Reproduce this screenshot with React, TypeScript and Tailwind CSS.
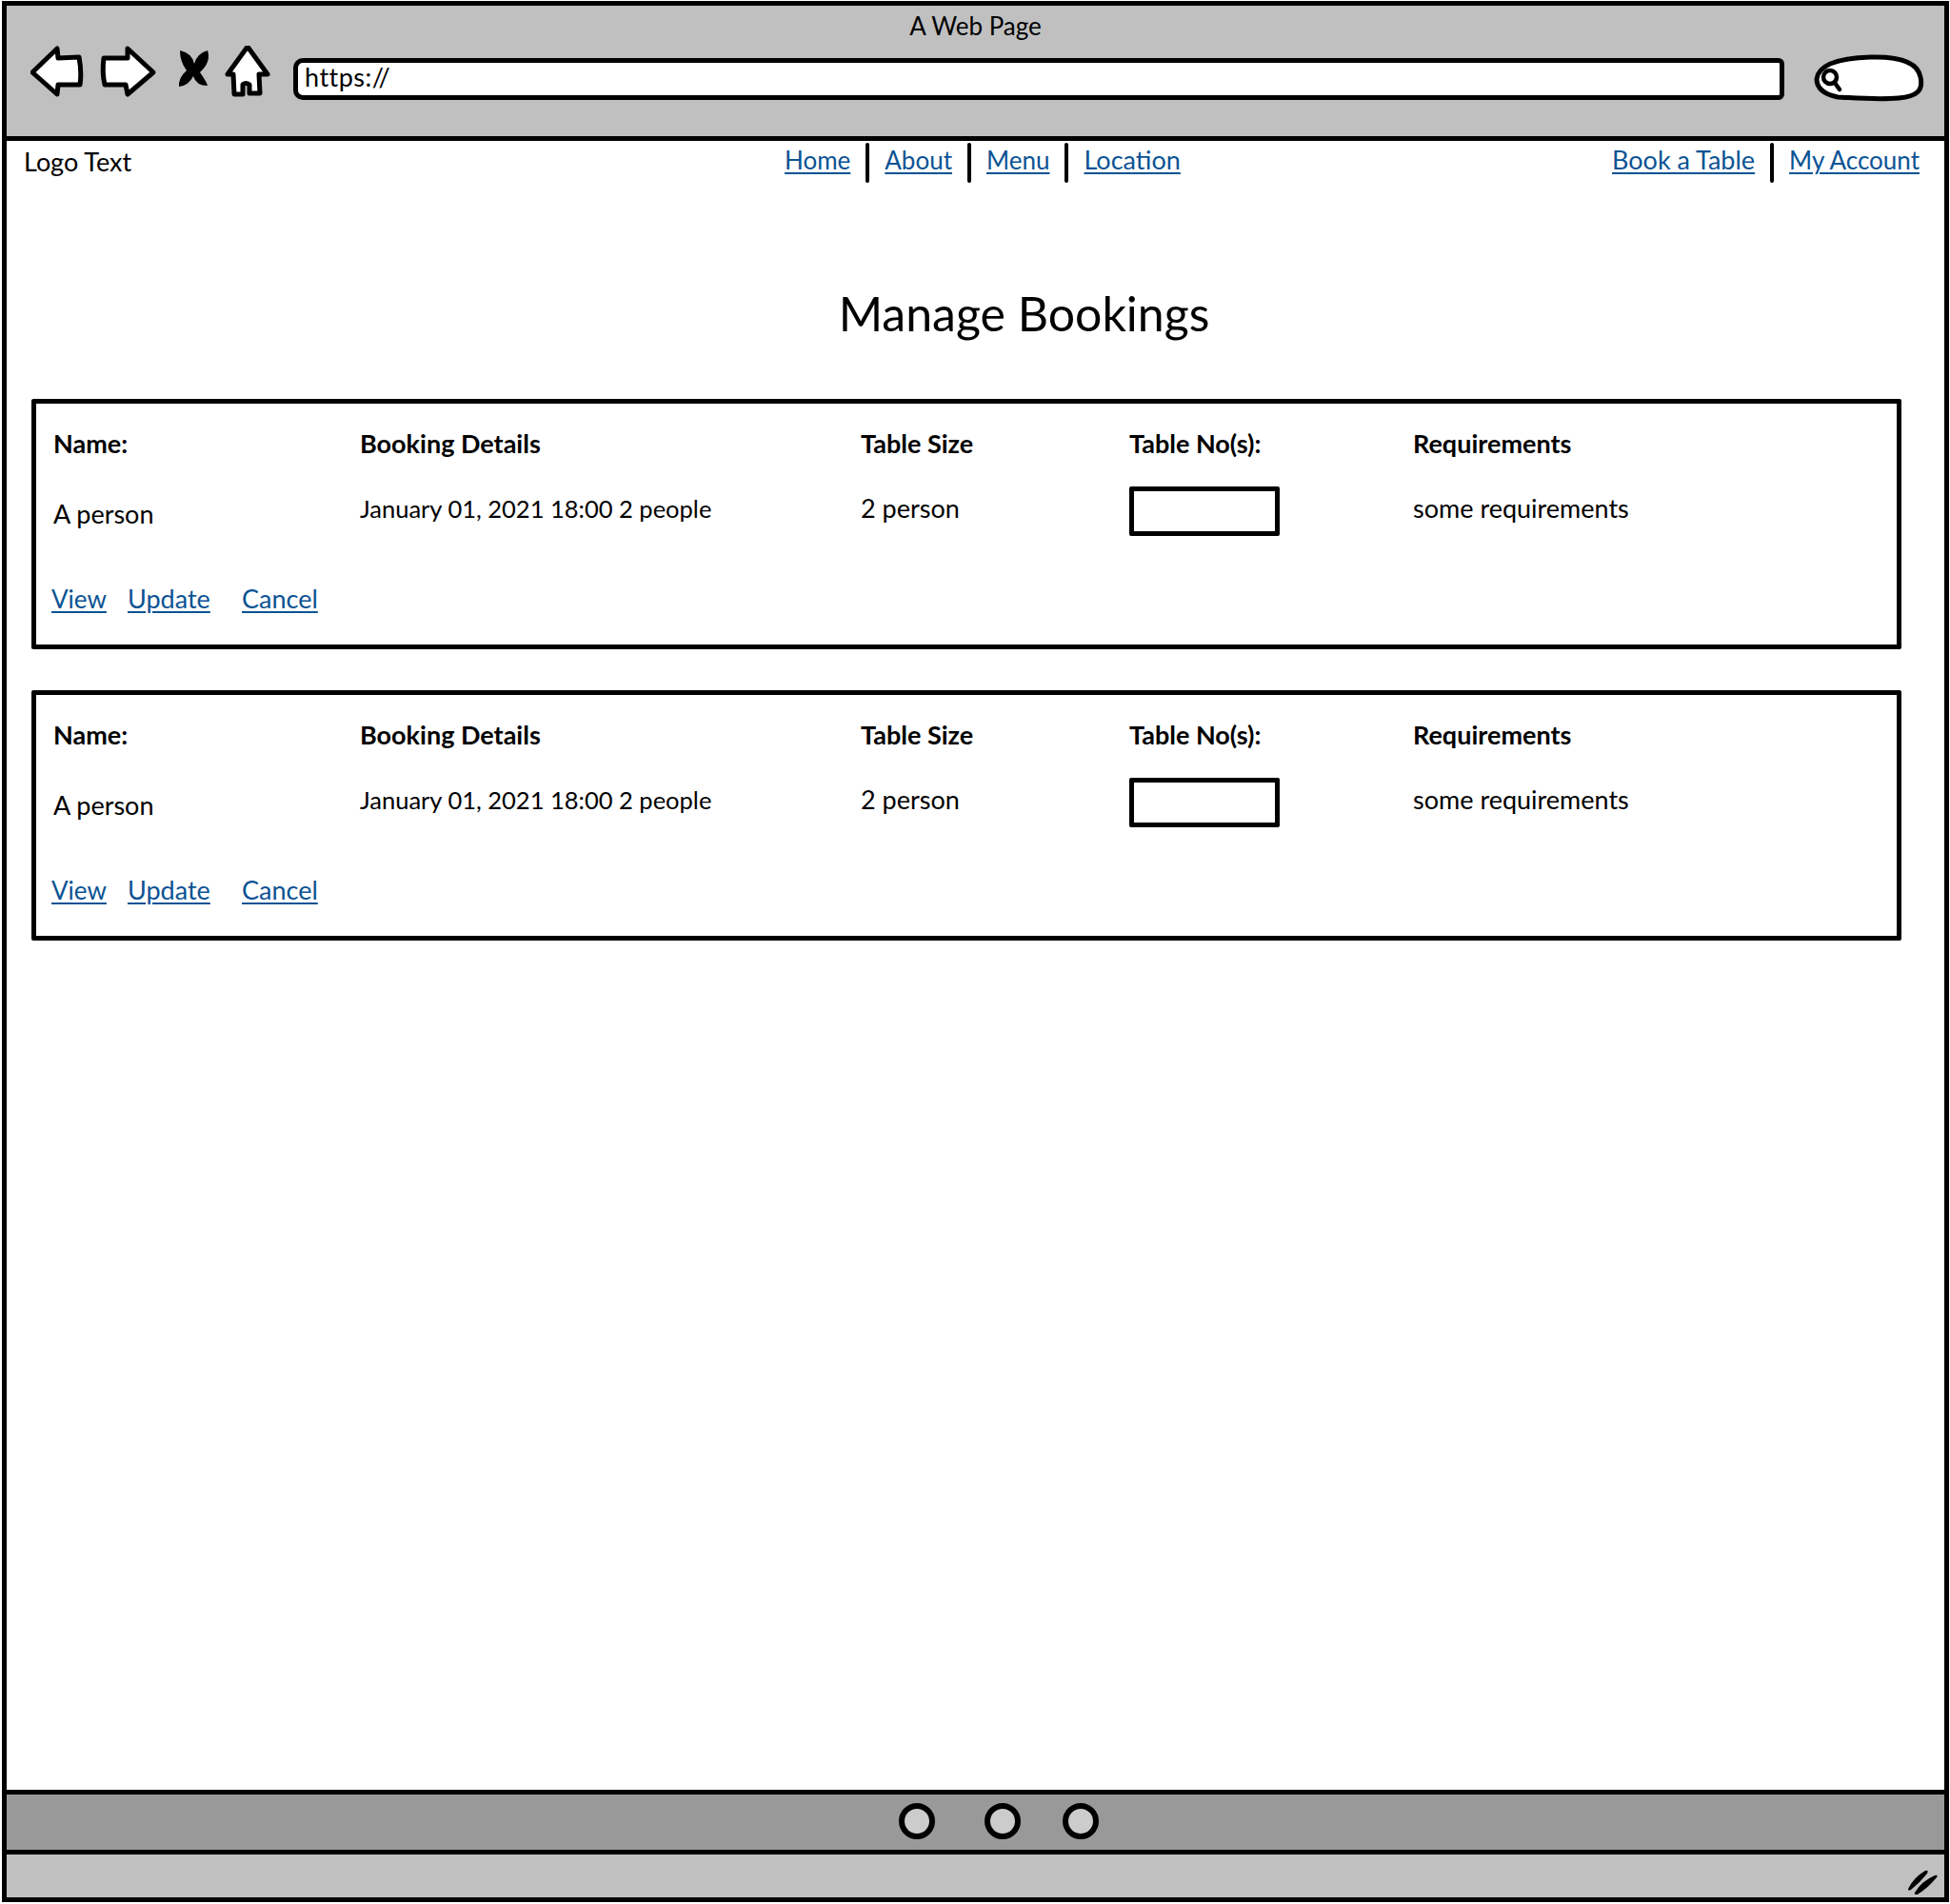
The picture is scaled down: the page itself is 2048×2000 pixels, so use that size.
const sketchFont = "font-['Lato','Noto_Sans',sans-serif]";

function NavLink({ children, wide }: { children: string; wide?: boolean }) {
  return (
    <a
      href="#"
      className={`mt-[3px] text-[#0b5394] leading-[30px] underline decoration-2 underline-offset-[3px] whitespace-nowrap ${wide ? "text-[27px]" : "text-[26px]"}`}
    >
      {children}
    </a>
  );
}

function Sep() {
  return <span className="mx-[16px] h-[42px] w-[4px] rounded-full bg-black" />;
}

function BrowserIcons() {
  return (
    <svg width="270" height="60" viewBox="0 0 270 60" fill="none" className="shrink-0 -mt-[5px]">
      <g stroke="#000" strokeWidth="5" strokeLinejoin="round" fill="#fff">
        <path d="M2 28 L28 3 L29 13 L51 12 Q54 28 52 41 L29 41 L28 51 Z" />
        <path d="M77 13 L102 13 L102 3 L129 28 L102 51 L100 41 L78 41 Q75 28 77 13 Z" />
        <path d="M228 1 L249 30 L240 30 L241 50 L230 50 L230 41 Q226 38 223 41 L223 51 L214 51 L213 30 L207 30 Z" />
      </g>
      <path
        d="M157 5 Q170 8 172 19 Q175 8 186 5 Q190 17 178 28 Q185 38 186 42 Q174 42 171 32 Q166 42 156 43 Q155 34 164 26 Q157 17 157 5 Z"
        fill="#000"
      />
    </svg>
  );
}

function SearchPill() {
  return (
    <svg width="122" height="52" viewBox="0 0 122 52" fill="none" className="shrink-0">
      <path
        d="M6 26 C8 10 32 4 62 3 C92 2 112 8 115 24 C118 38 112 44 92 46 C70 48 48 46 28 45 C14 42 6 36 6 26 Z"
        fill="#fff"
        stroke="#000"
        strokeWidth="5"
      />
      <circle cx="20" cy="24" r="7" stroke="#000" strokeWidth="4.5" />
      <path d="M25 30 L30 37" stroke="#000" strokeWidth="4.5" strokeLinecap="round" />
    </svg>
  );
}

function BookingCard() {
  const head = "font-bold text-[27px] leading-[30px] whitespace-nowrap";
  const cell = "text-[27px] leading-[30px] whitespace-nowrap";
  return (
    <div className="h-[263px] border-[5px] border-black rounded-[2px] pt-[27px] pl-[18px]">
      <div className="grid grid-cols-[322px_526px_282px_298px_1fr] items-start">
        <div className={head}>Name:</div>
        <div className={head}>Booking Details</div>
        <div className={head}>Table Size</div>
        <div className={head}>Table No(s):</div>
        <div className={head}>Requirements</div>
        <div className={`${cell} mt-[44px]`}>A person</div>
        <div className="mt-[38px] text-[25.5px] leading-[30px] whitespace-nowrap">January 01, 2021 18:00 2 people</div>
        <div className={`${cell} mt-[38px]`}>2 person</div>
        <div className="mt-[30px] h-[52px] w-[158px] border-[5px] border-black rounded-[2px]" />
        <div className={`${cell} mt-[38px]`}>some requirements</div>
      </div>
      <div className="mt-[51px] -ml-[2px] flex">
        <div className="w-[80px]"><NavLink>View</NavLink></div>
        <div className="w-[120px]"><NavLink wide>Update</NavLink></div>
        <div><NavLink wide>Cancel</NavLink></div>
      </div>
    </div>
  );
}

export default function App() {
  return (
    <div className={`w-[2048px] h-[2000px] bg-white pt-[1px] pl-[2px] text-black ${sketchFont}`}>
      <div className="w-[2045px] h-[1997px] border-[5px] border-black flex flex-col">
        <header className="h-[142px] shrink-0 bg-[#c0c0c0] border-b-[5px] border-black">
          <div className="h-[47px] pt-[6px] text-center text-[26px] leading-[30px]">A Web Page</div>
          <div className="flex items-start pl-[25px]">
            <BrowserIcons />
            <div className="mt-[8px] ml-[6px] w-[1566px] h-[44px] shrink-0 bg-white border-[5px] border-black rounded-l-[10px] rounded-r-[6px] pl-[7px] text-[27px] leading-[30px] tracking-[0.5px]">
              https://
            </div>
            <div className="mt-[4px] ml-[28px]"><SearchPill /></div>
          </div>
        </header>

        <main className="flex-1">
          <div className="flex items-start pt-[2px] pl-[18px] pr-[26px]">
            <div className="w-[799px] pt-[5px] text-[27px] leading-[30px]">Logo Text</div>
            <nav className="flex items-start">
              <NavLink>Home</NavLink>
              <Sep />
              <NavLink>About</NavLink>
              <Sep />
              <NavLink>Menu</NavLink>
              <Sep />
              <NavLink wide>Location</NavLink>
            </nav>
            <nav className="ml-auto flex items-start">
              <NavLink wide>Book a Table</NavLink>
              <Sep />
              <NavLink>My Account</NavLink>
            </nav>
          </div>

          <h1 className="mt-[107px] pl-[102px] text-center text-[50px] leading-[60px] font-normal">Manage Bookings</h1>

          <div className="mt-[60px] ml-[26px] w-[1964px] flex flex-col gap-[43px]">
            <BookingCard />
            <BookingCard />
          </div>
        </main>

        <footer className="shrink-0 -mx-[5px]">
          <div className="h-[68px] pb-[2px] bg-[#999999] border-[5px] border-black rounded-[3px] flex items-center">
            <span className="ml-[937px] size-[38px] rounded-full border-[6px] border-black bg-[#cccccc]" />
            <span className="ml-[52px] size-[38px] rounded-full border-[6px] border-black bg-[#cccccc]" />
            <span className="ml-[44px] size-[38px] rounded-full border-[6px] border-black bg-[#cccccc]" />
          </div>
          <div className="mx-[5px] h-[45px] bg-[#c0c0c0] flex items-end justify-end pr-[6px] pb-[3px]">
            <svg width="34" height="28" viewBox="0 0 34 28" fill="#000">
              <path d="M2 22 Q8 10 20 3 Q24 2 22 6 Q14 16 5 23 Q2 25 2 22 Z" />
              <path d="M9 26 Q16 14 30 8 Q34 7 32 10 Q24 20 12 28 Q8 29 9 26 Z" />
            </svg>
          </div>
        </footer>
      </div>
    </div>
  );
}
